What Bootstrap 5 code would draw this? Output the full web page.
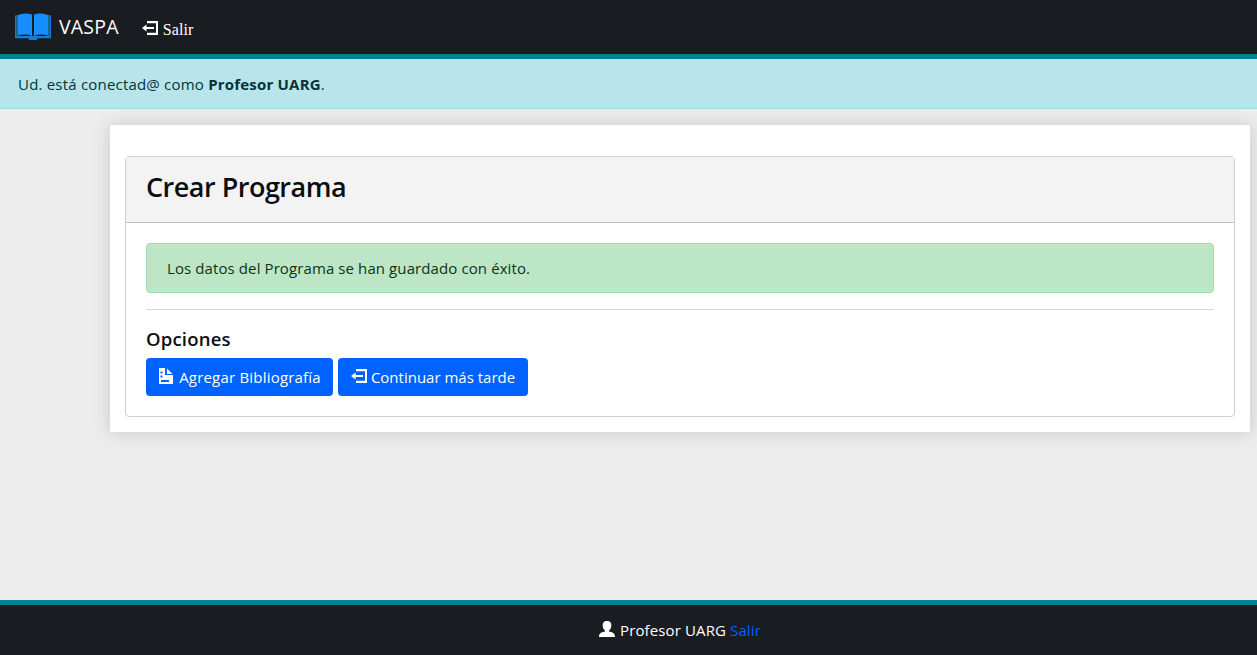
<!DOCTYPE html>
<html lang="es">
<head>
<meta charset="utf-8">
<meta name="viewport" content="width=device-width, initial-scale=1">
<title>VASPA - Crear Programa</title>
<link href="https://cdn.jsdelivr.net/npm/bootstrap@5.3.0/dist/css/bootstrap.min.css" rel="stylesheet">
<style>
body{background:#ececec;font-family:"Open Sans","Noto Sans",sans-serif;font-size:15px;line-height:24px;color:#0b0e11}
.top-bar{height:59px;background:#191c20;border-bottom:5px solid #008495;padding:0 15px}
.brand-name{font-size:19.5px;line-height:30px;color:#fff;margin-left:8px;letter-spacing:.2px}
.exit-link{font-family:"Liberation Serif",serif;font-size:16px;color:#fff;margin-left:23px;padding-top:2px}
.exit-link span{padding-top:4px;letter-spacing:.1px}
.user-alert{height:50px;background:#b8e5eb;border:0;border-bottom:1px solid #9edbe3;border-radius:0;color:#04333a;padding:13px 18px;margin-bottom:16px;letter-spacing:.2px}
.sheet{width:1140px;margin-left:110px;padding:31px 15px 15px;background:#fff;box-shadow:0 0 16px rgba(0,0,0,.15)}
.panel{border:1px solid #cfcfcf;border-radius:4px;height:261px}
.panel-head{background:#f3f3f3;border-bottom:1px solid #bfbfbf;height:66px;padding:12px 20px;border-radius:3px 3px 0 0!important}
.panel-head h1{font-size:27px;line-height:36px;font-weight:600;margin:0;letter-spacing:-.5px}
.panel-body{padding:20px}
.ok-alert{height:50px;background:#bde6c6;border:1px solid #a0dbae;border-radius:4px;color:#0c3316;padding:12px 20px;margin-bottom:16px;letter-spacing:.1px}
.rule{border-top:1px solid #d8d8d8;opacity:1;margin:0 0 17px}
.opt-title{font-size:18.5px;line-height:24px;font-weight:600;margin:0 0 7px;letter-spacing:.2px}
.options{gap:5px}
.btn-act{height:38px;background:#0062ff;color:#fff;border-radius:4px;font-size:15px;padding:0;white-space:nowrap}
.btn-add{width:187px;letter-spacing:.2px;gap:6px}
.btn-later{width:190px;gap:3px}
.btn-act svg{margin-bottom:2px}
.foot{height:55px;background:#191c20;border-top:5px solid #008495;color:#fff;padding-left:103px;letter-spacing:.12px}
.foot svg{margin-bottom:2px;margin-right:5px}
.foot a{color:#0062ff}
svg{display:block;flex:none}
</style>
</head>
<body class="d-flex flex-column vh-100 overflow-hidden">
<svg width="0" height="0" class="position-absolute">
<defs>
<symbol id="exit" viewBox="0 0 17 16"><path d="M5 1H16v14H5v-2.200H14V3.200H5z"/><path d="M0 8l4.500-3.500v2.500h7.500v2H4.500v2.500z"/></symbol>
</defs>
</svg>
<nav class="top-bar navbar flex-nowrap justify-content-start align-items-center">
<svg width="36" height="30" viewBox="0 0 36 30"><path d="M0 3.500h1.500V24H34.500V3.500H36V26.300H22.500l-.8 1.700h-7.400l-.8-1.700H0z" fill="#157dd8"/><path d="M1.200 3h2v21.500h-2zM32.800 3h2v21.500h-2z" fill="#1f6684"/><path d="M3 3q8-2.500 14-.5v21.500Q11 21.500 3 23.500zM33 3q-8-2.500-14-.5v21.500q6-2.500 14-.5z" fill="#158fff"/></svg>
<span class="brand-name">VASPA</span>
<a href="#" class="exit-link d-flex align-items-center text-decoration-none"><svg width="17" height="16" fill="#fff" class="me-1"><use href="#exit"/></svg><span>Salir</span></a>
</nav>
<div class="alert user-alert">Ud. está conectad@ como <strong>Profesor UARG</strong>.</div>
<main class="sheet">
<section class="card panel">
<div class="card-header panel-head"><h1>Crear Programa</h1></div>
<div class="card-body panel-body">
<div class="alert ok-alert">Los datos del Programa se han guardado con éxito.</div>
<hr class="rule">
<h2 class="opt-title">Opciones</h2>
<div class="d-flex options">
<a href="#" class="btn btn-primary border-0 btn-act btn-add d-flex align-items-center justify-content-center"><svg width="15" height="16" viewBox="0 0 15 16" fill="#fff"><path fill-rule="evenodd" d="M1 0h6v7h8v9H1zM2.500 3.500v2h2v-2zM2.500 7.500v2h2v-2zM3 12v2h8v-2z"/><path d="M9 .5L14.500 6H9z"/></svg>Agregar Bibliografía</a>
<a href="#" class="btn btn-primary border-0 btn-act btn-later d-flex align-items-center justify-content-center"><svg width="17" height="16" fill="#fff"><use href="#exit"/></svg>Continuar más tarde</a>
</div>
</div>
</section>
</main>
<footer class="foot mt-auto d-flex align-items-center justify-content-center">
<svg width="16" height="16" viewBox="0 0 16 16" fill="#fff"><path d="M8 0c3.200 0 4.400 2 4.300 4.600C12.200 7 11.300 8.600 10 9.600v.9c3.500.7 6 1.500 6 5.500H0c0-4 2.500-4.800 6-5.500v-.9C4.700 8.600 3.800 7 3.700 4.600 3.600 2 4.800 0 8 0z"/></svg>
<span>Profesor UARG</span><a href="#" class="text-decoration-none ms-1">Salir</a>
</footer>
<script src="https://cdn.jsdelivr.net/npm/bootstrap@5.3.0/dist/js/bootstrap.bundle.min.js"></script>
</body>
</html>
